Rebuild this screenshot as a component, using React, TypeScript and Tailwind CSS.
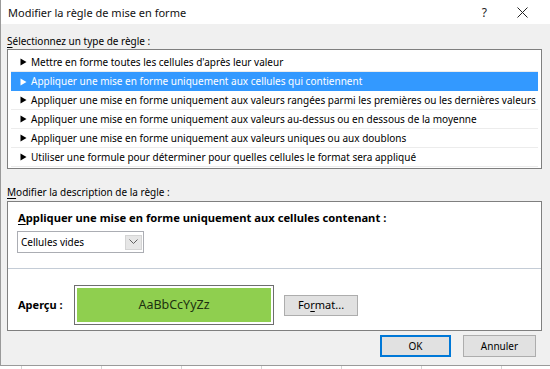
import React from "react";

const rows = [
  "Mettre en forme toutes les cellules d'après leur valeur",
  "Appliquer une mise en forme uniquement aux cellules qui contiennent",
  "Appliquer une mise en forme uniquement aux valeurs rangées parmi les premières ou les dernières valeurs",
  "Appliquer une mise en forme uniquement aux valeurs au-dessus ou en dessous de la moyenne",
  "Appliquer une mise en forme uniquement aux valeurs uniques ou aux doublons",
  "Utiliser une formule pour déterminer pour quelles cellules le format sera appliqué",
];

function Tri({ color }: { color: string }) {
  return (
    <svg width="7" height="8" viewBox="0 0 7 8" className="shrink-0">
      <path d="M0.5 0.5 L6.5 4 L0.5 7.5 Z" fill={color} />
    </svg>
  );
}

export default function App() {
  return (
    <div
      className="w-[550px] h-[369px] bg-white overflow-hidden relative text-[10px] text-black"
      style={{ fontFamily: '"Noto Sans", "Open Sans", sans-serif' }}
    >
      <div className="w-[552px] h-[366px] border-l border-b border-[#9a9a9a] bg-[#f0f0f0] flex flex-col">
        {/* Title bar */}
        <div className="h-[24px] bg-white flex items-center pl-[7px] shrink-0">
          <span className="text-[11px] leading-[15px] text-[#111]">Modifier la règle de mise en forme</span>
          <span className="ml-auto text-[12px] leading-[15px] text-[#222]">?</span>
          <svg width="11" height="11" viewBox="0 0 11 11" className="ml-[30px] mr-[24px]">
            <path d="M0.5 0.5 L10.5 10.5 M10.5 0.5 L0.5 10.5" stroke="#222" strokeWidth="1" />
          </svg>
        </div>
        <div className="pl-[6px] pr-[9px] flex flex-col">
          <div className="mt-[10px] leading-[15px] h-[15px]">
            <span className="underline underline-offset-2">S</span>électionnez un type de règle :
          </div>
          {/* List box */}
          <div className="w-[535px] border border-[#7f7f7f] bg-white pt-[3px] pb-[1px] px-[3px] flex flex-col">
            {rows.map((r, i) => (
              <div
                key={i}
                className={
                  i === 1
                    ? "h-[19px] flex items-center gap-[4px] bg-[#3399ff] text-white pl-[9px] whitespace-nowrap"
                    : "h-[19px] flex items-center gap-[4px] border-b border-[#ececec] pl-[9px] whitespace-nowrap"
                }
              >
                <Tri color={i === 1 ? "#ffffff" : "#000000"} />
                <span className="leading-[15px]">{r}</span>
              </div>
            ))}
          </div>
          <div className="mt-[16px] leading-[15px] h-[15px]">
            <span className="underline underline-offset-2">M</span>odifier la description de la règle :
          </div>
          {/* Description box */}
          <div className="mt-[1px] w-[535px] h-[130px] border border-[#7f7f7f] bg-white flex flex-col">
            <div className="pl-[10px] pt-[8px] font-bold text-[11.2px] leading-[15px]">
              <span className="underline underline-offset-2">A</span>ppliquer une mise en forme uniquement aux cellules contenant :
            </div>
            <div className="ml-[9px] mt-[6px] w-[127px] h-[22px] border border-[#abadb3] flex items-center pl-[3px] pr-[1px]">
              <span className="leading-[15px]">Cellules vides</span>
              <div className="ml-auto w-[17px] h-[15px] bg-[#e6e6e6] border border-[#d4d4d4] flex items-center justify-center">
                <svg width="9" height="6" viewBox="0 0 9 6">
                  <path d="M0.5 0.5 L4.5 4.5 L8.5 0.5" fill="none" stroke="#606060" strokeWidth="1" />
                </svg>
              </div>
            </div>
            <div className="mt-[15px] h-px bg-[#c4ccd6]" />
            <div className="flex items-center mt-[16px]">
              <div className="pl-[10px] w-[66px] font-bold text-[11px]">Aperçu :</div>
              <div className="w-[200px] h-[40px] border border-[#6e6e6e] p-[2px]">
                <div className="w-full h-full bg-[#8fcf4f] flex items-center justify-center text-[12.5px] text-[#1d3210]">
                  AaBbCcYyZz
                </div>
              </div>
              <div className="ml-[10px] w-[74px] h-[21px] bg-[#e1e1e1] border border-[#adadad] flex items-center justify-center">
                <span className="text-[11px]">
                  Fo<span className="underline underline-offset-2">r</span>mat...
                </span>
              </div>
            </div>
          </div>
          {/* Buttons */}
          <div className="flex justify-end mt-[4px] pr-[7px] gap-[12px]">
            <div className="w-[71px] h-[22px] bg-[#e1e1e1] border-2 border-[#0078d7] flex items-center justify-center">
              OK
            </div>
            <div className="w-[73px] h-[22px] bg-[#e1e1e1] border border-[#adadad] flex items-center justify-center">
              Annuler
            </div>
          </div>
        </div>
      </div>
      {/* Excel grid below */}
      <div className="flex h-[3px]">
        {[22, 80, 80, 80, 80, 80, 80].map((w, i) => (
          <div key={i} className="border-r border-[#d4d4d4] shrink-0" style={{ width: w }} />
        ))}
      </div>
    </div>
  );
}
